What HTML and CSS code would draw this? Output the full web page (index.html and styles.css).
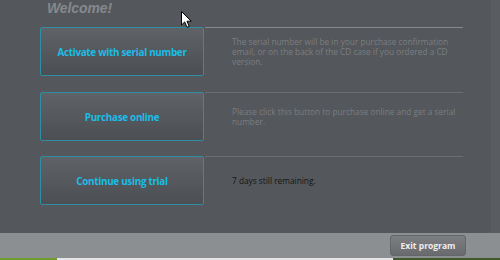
FILE: index.html
```html
<!DOCTYPE html>
<html lang="en">
<head>
  <meta charset="UTF-8">
  <title>Welcome</title>
  <link rel="stylesheet" href="styles.css">
</head>
<body>
  <div class="window">
    <!-- Main dark panel -->
    <div class="panel">
      <h1 class="welcome">Welcome!</h1>
      <div class="options">
        <div class="option">
          <button class="option-btn">Activate with serial number</button>
          <div class="option-info first">
            <p>The serial number will be in your purchase confirmation email, or on the back of the CD case if you ordered a CD version.</p>
          </div>
        </div>
        <div class="option">
          <button class="option-btn">Purchase online</button>
          <div class="option-info">
            <p>Please click this button to purchase online and get a serial number.</p>
          </div>
        </div>
        <div class="option">
          <button class="option-btn">Continue using trial</button>
          <div class="option-info">
            <p class="remaining">7 days still remaining.</p>
          </div>
        </div>
      </div>
    </div>

    <!-- Bottom bar -->
    <div class="footer">
      <button class="exit-btn">Exit program</button>
    </div>
    <div class="taskbar">
      <span class="tb-green"></span>
      <span class="tb-light"></span>
      <span class="tb-dark"></span>
    </div>
  </div>

  <!-- mouse pointer -->
  <svg class="cursor" width="12" height="18" viewBox="0 0 12 18">
    <path d="M0.5 0.5 L0.5 14 L3.7 10.9 L6 16.3 L8.2 15.4 L6 10.2 L10.3 10.2 Z" fill="#fff" stroke="#000" stroke-width="1"/>
  </svg>
</body>
</html>
```

FILE: styles.css
```css
body {
  margin: 0;
  width: 500px;
  height: 260px;
  overflow: hidden;
  background: #595c60;
  font-family: 'Open Sans', 'Liberation Sans', sans-serif;
}

.window {
  display: flex;
  flex-direction: column;
  height: 260px;
}

/* Dark panel */
.panel {
  width: 491px;
  height: 233px;
  background: #54575b;
  border-bottom-left-radius: 3px;
  border-bottom-right-radius: 3px;
  box-sizing: border-box;
  padding-left: 40px;
}
.welcome {
  margin: 0 0 0 7px;
  font-family: 'Liberation Sans', sans-serif;
  font-size: 14px;
  line-height: 16px;
  font-weight: 700;
  font-style: italic;
  color: #86898d;
  letter-spacing: -0.1px;
}

.options {
  display: flex;
  flex-direction: column;
  gap: 16px;
  margin-top: 11px;
}
.option {
  display: flex;
  height: 49px;
}
.option + .option + .option { margin-top: -1px; }
.option-btn {
  width: 164px;
  height: 49px;
  flex: none;
  border: 1px solid #2f8ea2;
  border-radius: 2px;
  background: linear-gradient(to bottom, #5f6266, #4b4e52);
  color: #1bbde6;
  font-family: 'Open Sans', sans-serif;
  font-size: 9.9px;
  font-weight: 700;
  letter-spacing: -0.3px;
  padding: 0;
}
.option-info {
  width: 258px;
  margin-left: 1px;
  border-top: 1px solid #6b6e72;
  display: flex;
  align-items: center;
  padding-left: 27px;
  box-sizing: border-box;
}
.option-info.first { border-top-color: #86898d; }
.option-info p {
  margin: 0;
  font-size: 8.3px;
  line-height: 10px;
  color: #7b7e82;
}
.option-info p.remaining { color: #151515; }

/* Footer with exit button */
.footer {
  height: 25px;
  background: #8b8f92;
  display: flex;
  justify-content: flex-end;
  align-items: flex-start;
  padding: 2px 34px 0 0;
  box-sizing: border-box;
}
.exit-btn {
  width: 76px;
  height: 21px;
  border: 1px solid #636568;
  border-radius: 3px;
  background: linear-gradient(to bottom, #7c7e81, #686a6d);
  color: #eeeeee;
  font-family: 'Open Sans', sans-serif;
  font-size: 8.5px;
  font-weight: 700;
  padding: 0;
}

.taskbar {
  display: flex;
  height: 2px;
}
.tb-green { width: 57px; background: #6f9d2b; }
.tb-light { width: 336px; background: #e4e6e8; }
.tb-dark  { flex: 1; background: #3f5a2a; }

.cursor {
  position: absolute;
  left: 181px;
  top: 11px;
}
```
